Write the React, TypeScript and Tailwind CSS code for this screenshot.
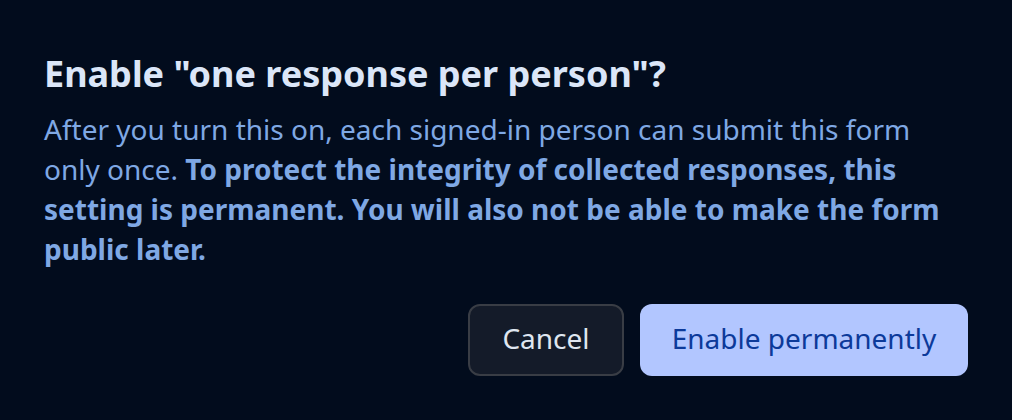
export default function App() {
  return (
    <div className="w-[1012px] h-[420px] bg-[#020c1d] font-['Noto_Sans',sans-serif] px-[44px] pt-[52px]">
      <h2 className="text-[36px] leading-[44px] font-bold text-[#dbe6f8]">Enable "one response per person"?</h2>
      <p className="mt-[13px] text-[28px] leading-[40px] text-[#7fa8e4]">
        After you turn this on, each signed-in person can submit this form only once.{" "}
        <span className="font-bold">
          To protect the integrity of collected responses, this setting is permanent. You will also not be able to make the
          form public later.
        </span>
      </p>
      <div className="mt-[35px] flex justify-end gap-4">
        <button className="h-[72px] w-[156px] pb-[5px] rounded-[12px] border-2 border-[#393d45] bg-[#141b29] text-[28px] text-[#dfe6f0]">
          Cancel
        </button>
        <button className="h-[72px] w-[328px] pb-[5px] rounded-[12px] bg-[#b2c6ff] text-[28px] text-[#0c3a9a]">
          Enable permanently
        </button>
      </div>
    </div>
  )
}
